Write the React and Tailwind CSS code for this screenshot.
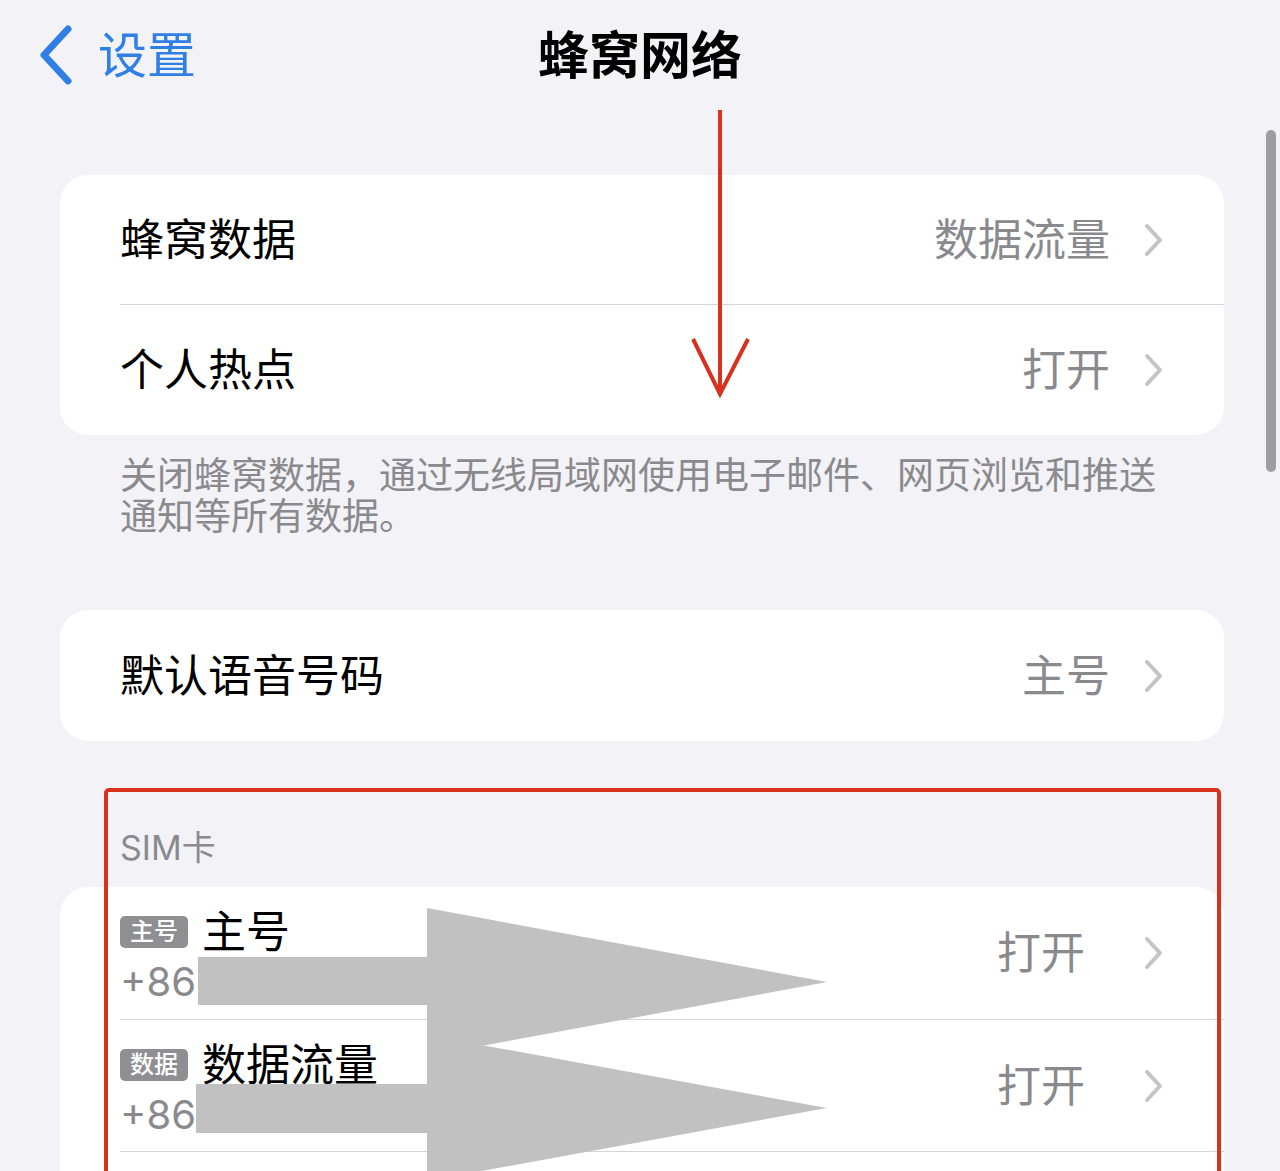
const FONT = { fontFamily: 'Inter, "Noto Sans CJK SC", "Noto Sans", sans-serif' };

/* Grey disclosure chevron on the right of every settings row */
function Chevron() {
  return (
    <svg width="20" height="34" viewBox="0 0 20 34" className="shrink-0">
      <path d="M3 3 L16 17 L3 31" fill="none" stroke="#c4c4c7" strokeWidth="4" strokeLinecap="round" strokeLinejoin="round" />
    </svg>
  );
}

function Row({ label, value, last, h = "h-[130px]" }) {
  return (
    <div className="pl-[60px]">
      <div className={`flex items-center pr-[60px] ${h} ${last ? "" : "border-b border-[#d4d4d8]"}`}>
        <span className="flex-1 text-[44px] leading-none text-black">{label}</span>
        <span className="mr-[34px] text-[44px] leading-none text-[#8a8a8e]">{value}</span>
        <Chevron />
      </div>
    </div>
  );
}

function SimRow({ badge, name, h, last }) {
  return (
    <div className="pl-[60px]">
      <div className={`flex items-center pr-[60px] ${h} ${last ? "" : "border-b border-[#d4d4d8]"}`}>
        <div className="mt-[8px] flex flex-1 flex-col">
          <div className="flex h-[50px] items-center gap-[14px]">
            <span className="flex h-[32px] w-[68px] items-center justify-center rounded-[5px] bg-[#8e8e93] text-[24px] font-medium leading-none text-white">{badge}</span>
            <span className="text-[44px] leading-none text-black">{name}</span>
          </div>
          <div className="text-[40px] leading-[50px] text-[#8a8a8e]">+86</div>
        </div>
        <span className="mr-[59px] text-[44px] leading-none text-[#8a8a8e]">打开</span>
        <Chevron />
      </div>
    </div>
  );
}

export default function App() {
  return (
    <div className="relative h-[1171px] w-[1280px] overflow-hidden bg-[#f2f2f7]" style={FONT}>
      {/* Nav bar */}
      <div className="grid h-[110px] grid-cols-[1fr_auto_1fr] items-center">
        <div className="flex items-center gap-[20px] pl-[38px]">
          <svg width="40" height="60" viewBox="0 0 40 60">
            <path d="M30 4 L6 30 L30 56" fill="none" stroke="#2f7fe4" strokeWidth="7" strokeLinecap="round" strokeLinejoin="round" />
          </svg>
          <span className="text-[49px] leading-none text-[#2f7fe4]">设置</span>
        </div>
        <div className="text-[51px] font-bold leading-none text-black">蜂窝网络</div>
        <div />
      </div>

      <div className="pl-[60px] pr-[56px]">
        <div className="mt-[65px] overflow-hidden rounded-[28px] bg-white">
          <Row label="蜂窝数据" value="数据流量" />
          <Row label="个人热点" value="打开" last />
        </div>

        <p className="mt-[20px] pl-[60px] pr-[40px] text-[37px] leading-[41px] text-[#8a8a8e]">
          关闭蜂窝数据，通过无线局域网使用电子邮件、网页浏览和推送通知等所有数据。
        </p>

        <div className="mt-[73px] overflow-hidden rounded-[28px] bg-white">
          <Row label="默认语音号码" value="主号" h="h-[131px]" last />
        </div>

        <div className="mt-[87px] pl-[60px] text-[34px] leading-[40px] text-[#8a8a8e]">SIM卡</div>

        <div className="mt-[19px] rounded-t-[28px] bg-white">
          <SimRow badge="主号" name="主号" h="h-[133px]" />
          <SimRow badge="数据" name="数据流量" h="h-[132px]" />
          <div className="h-[130px]" />
        </div>
      </div>

      {/* Scroll indicator */}
      <div className="absolute left-[1266px] top-[130px] h-[342px] w-[10px] rounded-full bg-[#9d9da2]" />

      {/* Annotations drawn over the screenshot */}
      <svg className="pointer-events-none absolute left-0 top-0" width="1280" height="1171" viewBox="0 0 1280 1171">
        <line x1="720" y1="110" x2="720" y2="392" stroke="#d8321e" strokeWidth="4" />
        <polyline points="693,339 720,394 748,339" fill="none" stroke="#d8321e" strokeWidth="4" strokeLinejoin="miter" />
        <rect x="106" y="790" width="1113" height="500" rx="3" fill="none" stroke="#d8321e" strokeWidth="4" />
        <path d="M198 957 H427 V908 L827 982 L427 1056 V1005 H198 Z" fill="#c1c1c1" />
        <path d="M196 1084 H427 V1035 L827 1108 L427 1181 V1133 H196 Z" fill="#c1c1c1" />
      </svg>
    </div>
  );
}
